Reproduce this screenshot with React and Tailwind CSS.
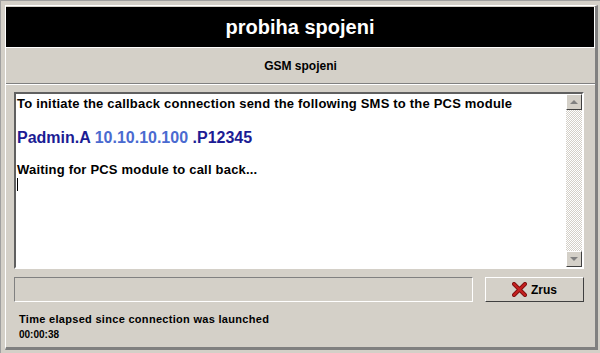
import React from "react";

const font = "font-['Liberation_Sans',Arial,sans-serif]";

/* -------------------------------------------------------------------------- */
/*                                SCROLLBAR                                   */
/* -------------------------------------------------------------------------- */

const ArrowButton = ({ up }) => (
  <div className="flex h-[16px] w-[16px] items-center justify-center border border-t-white border-l-white border-r-[#404040] border-b-[#404040] bg-[#d4d0c8]">
    {up ? (
      <div className="h-0 w-0 border-x-[4px] border-b-[4px] border-x-transparent border-b-[#808080]" />
    ) : (
      <div className="h-0 w-0 border-x-[4px] border-t-[4px] border-x-transparent border-t-[#808080]" />
    )}
  </div>
);

const ScrollBar = () => (
  <div className="flex w-[16px] flex-col">
    <ArrowButton up />
    <div className="flex-1 bg-[repeating-conic-gradient(#d4d0c8_0_25%,#ffffff_0_50%)] bg-[length:2px_2px]" />
    <ArrowButton />
  </div>
);

/* -------------------------------------------------------------------------- */
/*                                  APP                                       */
/* -------------------------------------------------------------------------- */

const App = () => {
  return (
    <div
      className={`${font} h-[353px] w-[600px] overflow-hidden border-l border-t border-[#a0a0a0] bg-[#d4d0c8] pb-[3px] pl-[4px] pr-[2px] pt-[4px]`}
    >
      <div className="flex h-full flex-col border-l border-t border-l-white border-t-white border-r-[3px] border-b-[3px] border-r-[#808080] border-b-[#808080]">
        {/* Header */}
        <div className="mt-[1px] flex h-[41px] items-center justify-center border-b border-r border-white bg-black">
          <span className="text-[20px] font-bold text-white">
            probiha spojeni
          </span>
        </div>

        <div className="flex h-[35px] items-center justify-center">
          <span className="text-[12px] font-bold text-black">
            GSM spojeni
          </span>
        </div>

        <div className="h-[2px] border-t border-b border-t-[#808080] border-b-white" />

        {/* Body */}
        <div className="flex flex-1 flex-col pl-[8px] pr-[11px] pt-[7px]">
          <div className="flex h-[177px] border-2 border-t-[#606060] border-l-[#606060] border-b-white border-r-white bg-white">
            <div className="flex-1 pl-[1px] pt-[2px] text-black">
              <div className="text-[13px] font-bold leading-[16px] tracking-[0.2px]">
                To initiate the callback connection send the following SMS to the PCS module
              </div>

              <div className="mt-[16px] text-[16px] font-bold leading-[20px]">
                <span className="text-[#1c1c94]">Padmin.A </span>
                <span className="text-[#4a6ad0]">10.10.10.100</span>
                <span className="text-[#1c1c94]"> .P12345</span>
              </div>

              <div className="mt-[14px] text-[13px] font-bold leading-[16px] tracking-[0.2px]">
                Waiting for PCS module to call back...
              </div>

              <div className="h-[13px] w-[1px] bg-black" />
            </div>

            <ScrollBar />
          </div>

          <div className="mt-[8px] flex h-[25px] gap-[12px]">
            <div className="flex-1 border border-t-[#808080] border-l-[#808080] border-b-white border-r-white" />

            <button className="flex w-[99px] items-center justify-center gap-[4px] border border-t-white border-l-white border-r-[#404040] border-b-[#404040] bg-[#d4d0c8]">
              <svg width="15" height="15" viewBox="0 0 15 15">
                <path
                  d="M2 2 L13 13 M13 2 L2 13"
                  stroke="#7a0e0e"
                  strokeWidth="4"
                  strokeLinecap="round"
                />
                <path
                  d="M2 2 L13 13 M13 2 L2 13"
                  stroke="#c42020"
                  strokeWidth="2.4"
                  strokeLinecap="round"
                />
              </svg>
              <span className="text-[12px] font-bold text-black">Zrus</span>
            </button>
          </div>

          <div className="mt-[10px] pl-[5px] text-[11px] font-bold leading-[14px] tracking-[0.3px] text-black">
            Time elapsed since connection was launched
          </div>
          <div className="mt-[2px] pl-[5px] text-[10px] font-bold leading-[13px] text-black">
            00:00:38
          </div>
        </div>
      </div>
    </div>
  );
};

export default App;
